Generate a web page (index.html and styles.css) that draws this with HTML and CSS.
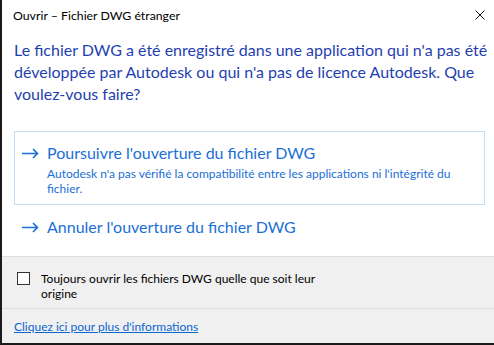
FILE: index.html
```html
<!DOCTYPE html>
<html lang="fr">
<head>
  <meta charset="UTF-8">
  <title>Ouvrir – Fichier DWG étranger</title>
  <link rel="stylesheet" href="styles.css">
</head>
<body>
  <div class="dialog">
    <div class="titre">
      <span>Ouvrir – Fichier DWG étranger</span>
      <svg class="fermer" width="10" height="10" viewBox="0 0 10 10">
        <path d="M0.5 0.5 L9.5 9.5 M9.5 0.5 L0.5 9.5" stroke="#111" stroke-width="1" fill="none"/>
      </svg>
    </div>

    <div class="contenu">
      <p class="question">Le fichier DWG a été enregistré dans une application qui n'a pas été développée par Autodesk ou qui n'a pas de licence Autodesk. Que voulez-vous faire?</p>

      <div class="choix actif">
        <svg class="fleche" width="17" height="11" viewBox="0 0 17 11">
          <path d="M0 5.5 H15.5 M11 1 L15.5 5.5 L11 10" stroke="#1a6fd6" stroke-width="1.6" fill="none"/>
        </svg>
        <div>
          <div class="choix-titre">Poursuivre l'ouverture du fichier DWG</div>
          <div class="choix-detail">Autodesk n'a pas vérifié la compatibilité entre les applications ni l'intégrité du fichier.</div>
        </div>
      </div>

      <div class="choix">
        <svg class="fleche" width="17" height="11" viewBox="0 0 17 11">
          <path d="M0 5.5 H15.5 M11 1 L15.5 5.5 L11 10" stroke="#1a6fd6" stroke-width="1.6" fill="none"/>
        </svg>
        <div>
          <div class="choix-titre">Annuler l'ouverture du fichier DWG</div>
        </div>
      </div>
    </div>

    <div class="pied">
      <label class="case">
        <span class="boite"></span>
        <span>Toujours ouvrir les fichiers DWG quelle que soit leur origine</span>
      </label>
    </div>

    <div class="infos">
      <a href="#">Cliquez ici pour plus d'informations</a>
    </div>
  </div>
</body>
</html>
```

FILE: styles.css
```css
body {
  margin: 0;
  background: #fff;
  font-family: Lato, "Noto Sans", sans-serif;
}
.dialog {
  width: 492px;
  height: 343px;
  border-left: 2px solid #1a1a1a;
  border-bottom: 2px solid #1a1a1a;
  display: flex;
  flex-direction: column;
}
.titre {
  height: 30px;
  display: flex;
  align-items: center;
  justify-content: space-between;
  padding: 0 9px 0 11px;
  font-size: 12.3px;
  color: #000;
}
.contenu {
  padding: 9px 0 0 12px;
  height: 217px;
}
.question {
  margin: 0 0 26px 0;
  font-size: 16px;
  line-height: 22px;
  color: #1f3fb0;
}
.choix {
  display: flex;
  align-items: flex-start;
  gap: 8px;
  margin-right: 9px;
  padding: 10px 8px 8px 7px;
  border: 1px solid transparent;
  color: #1a6fd6;
}
.choix.actif {
  border-color: #c4def4;
}
.fleche {
  margin-top: 6px;
  flex-shrink: 0;
}
.choix-titre {
  font-size: 16px;
  line-height: 22px;
}
.choix-detail {
  font-size: 12px;
  line-height: 15px;
  margin-top: 2px;
}
.pied {
  background: #f0f0f0;
  border-top: 1px solid #dfdfdf;
  height: 52px;
  padding: 14px 0 0 15px;
  box-sizing: border-box;
}
.case {
  display: flex;
  align-items: flex-start;
  gap: 11px;
  font-size: 12px;
  line-height: 15px;
  color: #000;
  width: 305px;
}
.boite {
  width: 11px;
  height: 11px;
  border: 1px solid #333;
  background: #fff;
  margin-top: 1px;
  flex-shrink: 0;
}
.infos {
  flex: 1;
  background: #f0f0f0;
  border-top: 1px solid #dfdfdf;
  padding: 10px 12px 0 12px;
  font-size: 12px;
}
.infos a {
  color: #0b66d0;
}
```
